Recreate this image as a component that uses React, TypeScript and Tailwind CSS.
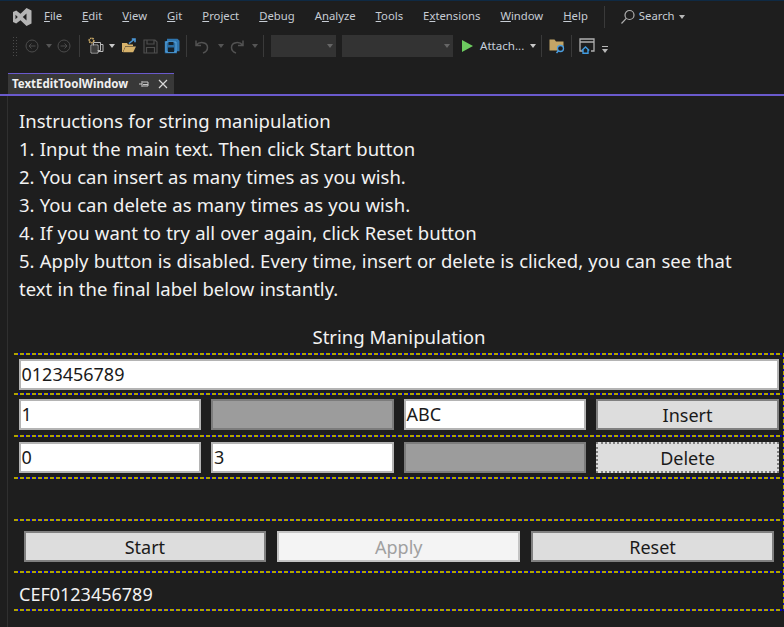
const font = "[font-family:'Noto_Sans',sans-serif]";

const menuItems: [string, string, string][] = [
    ["", "F", "ile"],
    ["", "E", "dit"],
    ["", "V", "iew"],
    ["", "G", "it"],
    ["", "P", "roject"],
    ["", "D", "ebug"],
    ["A", "n", "alyze"],
    ["", "T", "ools"],
    ["E", "x", "tensions"],
    ["", "W", "indow"],
    ["", "H", "elp"],
];

const instructions = [
    "Instructions for string manipulation",
    "1. Input the main text. Then click Start button",
    "2. You can insert as many times as you wish.",
    "3. You can delete as many times as you wish.",
    "4. If you want to try all over again, click Reset button",
    "5. Apply button is disabled. Every time, insert or delete is clicked, you can see that text in the final label below instantly.",
];

const Caret = ({ className = "" }: { className?: string }) => (
    <span className={`h-0 w-0 border-x-[3.5px] border-t-[4px] border-x-transparent border-t-[#8a8a8a] ${className}`} />
);

const Sep = ({ className = "" }: { className?: string }) => <span className={`h-[22px] w-px bg-[#3a3a3a] ${className}`} />;

const Dash = () => (
    <div className="h-[2px] w-full bg-[repeating-linear-gradient(90deg,#b0a400_0_4px,#0000c0_4px_6px)]" />
);

const Field = ({ value, disabled }: { value?: string; disabled?: boolean }) => (
    <div
        className={`flex h-[31px] items-center border-2 pl-[1px] text-[18px] text-[#1a1a1a] ${
            disabled ? "border-[#7c7c7c] bg-[#9c9c9c]" : "border-[#b4b4b4] bg-white"
        }`}
    >
        {value}
    </div>
);

const Btn = ({ label, focused, disabled }: { label: string; focused?: boolean; disabled?: boolean }) => (
    <div
        className={`flex h-[31px] items-center justify-center border-2 pt-[2px] text-[18px] ${
            disabled ? "border-[#c4c4c4] bg-[#f4f4f4] text-[#a0a0a0]" : "border-[#808080] bg-[#dddddd] text-[#1a1a1a]"
        } ${focused ? "border-dotted border-[#6a6a6a]" : ""}`}
    >
        {label}
    </div>
);

const VsLogo = () => (
    <svg width="20" height="20" viewBox="0 0 20 20" className="mt-[1px]">
        <path
            d="M14.5 1 19.5 3.5V16.5L14.5 19 8.5 13.2 4.2 16.5 1 15V5L4.2 3.5 8.5 6.8ZM14.5 6.5 10.8 10 14.5 13.5ZM3.5 7.8V12.2L5.8 10Z"
            fill="#b4b4b4"
            fillRule="evenodd"
        />
    </svg>
);

const Toolbar = () => (
    <div className="mt-[3px] flex h-[22px] items-center pl-[12px]">
        <span className="h-[20px] w-[5px] bg-[radial-gradient(#4a4a4a_1px,transparent_1px)] bg-[length:3px_3px]" />
        {/* back */}
        <svg width="14" height="14" viewBox="0 0 14 14" fill="none" stroke="#4c4c4c" className="ml-[8px]">
            <circle cx="7" cy="7" r="6" />
            <path d="M10.5 7H4M6.5 4.5 4 7l2.5 2.5" />
        </svg>
        <Caret className="ml-[7px] border-t-[#555555]" />
        <svg width="14" height="14" viewBox="0 0 14 14" fill="none" stroke="#4c4c4c" className="ml-[5px]">
            <circle cx="7" cy="7" r="6" />
            <path d="M3.5 7H10M7.5 4.5 10 7l-2.5 2.5" />
        </svg>
        <Sep className="ml-[8px]" />
        {/* new project */}
        <svg width="17" height="18" viewBox="0 0 17 18" fill="none" className="ml-[8px]">
            <circle cx="3.5" cy="3.5" r="2.3" stroke="#d8b46c" strokeWidth="1.6" strokeDasharray="1.4 .7" />
            <path d="M5.5 5.5h7v8h-7zM3 8h7v8H3zM12.5 7.5H15v7h-5" stroke="#b8b8b8" />
            <path d="M3.5 8.5h6v7h-6z" fill="#3c3c3c" />
        </svg>
        <Caret className="ml-[4px] border-t-[#c8c8c8]" />
        {/* open */}
        <svg width="16" height="16" viewBox="0 0 16 16" className="ml-[6px]">
            <path d="M1 14V5h5l1 1.5h5V8H4.5L1.8 14H1Z" fill="#d7b26a" />
            <path d="M4.5 8.5H15l-2.8 5.7H2Z" fill="#d7b26a" />
            <path d="M8 5.5 13 1.5M10.8 1H14v3.2" stroke="#4b97d6" strokeWidth="1.6" fill="none" />
        </svg>
        {/* save */}
        <svg width="15" height="15" viewBox="0 0 15 15" fill="none" stroke="#4e4e4e" strokeWidth="1.2" className="ml-[6px]">
            <path d="M1 1h11l2 2v11H1zM4 1v4h7V1M3.5 14V8.5h8V14" />
        </svg>
        {/* save all */}
        <svg width="16" height="16" viewBox="0 0 16 16" className="ml-[6px]">
            <path d="M3 0.8h10.5l2 2v10.5H13V15.2H.8V3H3Z" fill="#2f75ae" />
            <path d="M2 4h10v10H2z" fill="#2a6da3" stroke="#58a6e0" />
            <path d="M4.5 4h5v3h-5zM4 9.5h6V14H4z" fill="#16222c" />
        </svg>
        <Sep className="ml-[6px]" />
        {/* undo */}
        <svg width="14" height="15" viewBox="0 0 14 15" fill="none" stroke="#525252" strokeWidth="1.5" className="ml-[8px]">
            <path d="M1 1.5V6.5H6M1.5 6 C4 2.5 12.5 2.5 12.5 8.5 12.5 11 11 13 8 14" />
        </svg>
        <Caret className="ml-[9px] border-t-[#555555]" />
        <svg width="14" height="15" viewBox="0 0 14 15" fill="none" stroke="#525252" strokeWidth="1.5" className="ml-[6px]">
            <path d="M13 1.5V6.5H8M12.5 6C10 2.5 1.5 2.5 1.5 8.5 1.5 11 3 13 6 14" />
        </svg>
        <Caret className="ml-[8px] border-t-[#555555]" />
        <Sep className="ml-[5px]" />
        <div className="ml-[7px] flex h-[22px] w-[65px] items-center justify-end bg-[#333333] pr-[3px]">
            <Caret className="border-t-[#666666]" />
        </div>
        <div className="ml-[6px] flex h-[22px] w-[111px] items-center justify-end bg-[#333333] pr-[3px]">
            <Caret className="border-t-[#666666]" />
        </div>
        <span className="ml-[9px] h-0 w-0 border-y-[6.5px] border-l-[11px] border-y-transparent border-l-[#6ccb5f]" />
        <span className="ml-[7px] w-[46px] whitespace-nowrap text-[11.6px] text-[#c4cfdc]">Attach...</span>
        <Caret className="ml-[4px] border-t-[#c8c8c8]" />
        <Sep className="ml-[5px]" />
        {/* find in files */}
        <svg width="16" height="16" viewBox="0 0 16 16" className="ml-[7px]">
            <path d="M.5 1.5h5L7 3.5h7.5v9H.5Z" fill="#c3a566" />
            <circle cx="11.5" cy="10.5" r="3" fill="#1e1e1e" stroke="#4b9ee0" strokeWidth="1.3" />
            <path d="M9.5 12.8 7.5 15" stroke="#4b9ee0" strokeWidth="1.5" />
        </svg>
        <Sep className="ml-[6px]" />
        {/* window home */}
        <svg width="16" height="16" viewBox="0 0 16 16" fill="none" className="ml-[7px]">
            <path d="M4 13H1V1h14v12h-3M1 4h14" stroke="#b0b0b0" strokeWidth="1.3" />
            <path d="M2.8 12.5 6.5 9l3.7 3.5M4 11.5v3.7h5v-3.7" stroke="#3f9be0" strokeWidth="1.4" />
        </svg>
        <span className="ml-[6px] mt-[7px] flex w-[7px] flex-col items-center gap-[2px]">
            <span className="h-px w-[6px] bg-[#b8b8b8]" />
            <Caret className="border-t-[#b8b8b8]" />
        </span>
    </div>
);

const TitleBar = () => (
    <div className="flex h-[31px] items-center pl-[12px]">
        <VsLogo />
        <div className="ml-[2px] flex items-center">
            {menuItems.map(([pre, key, rest]) => (
                <span key={key + rest} className="whitespace-nowrap px-[10px] text-[11.3px] text-[#c6ccd4]">
                    {pre}
                    <u>{key}</u>
                    {rest}
                </span>
            ))}
        </div>
        <Sep className="ml-[6px]" />
        <svg width="16" height="16" viewBox="0 0 16 16" fill="none" stroke="#b0b0b0" strokeWidth="1.2" className="ml-[15px]">
            <circle cx="9.5" cy="6" r="4.5" />
            <path d="M6.3 9.3 1.5 14.5" />
        </svg>
        <span className="ml-[3px] text-[11.3px] text-[#c6ccd4]">Search</span>
        <Caret className="ml-[4px] border-t-[#b8b8b8]" />
    </div>
);

const TabStrip = () => (
    <div className="mt-[16px] flex h-[23px] flex-col">
        <div className="ml-[8px] flex h-[21px] w-[166px] items-center border-t border-[#6a5acd] bg-[#383838] pl-[4px]">
            <span className="w-[117px] whitespace-nowrap text-[11.5px] font-bold text-[#f0f0f0]">TextEditToolWindow</span>
            <svg width="10" height="10" viewBox="0 0 10 10" fill="none" stroke="#c8c8c8" className="ml-[10px]">
                <path d="M0 5h3M3 2v6M3.5 3H9v4H3.5M4 5.5h5" />
            </svg>
            <svg width="10" height="10" viewBox="0 0 10 10" fill="none" stroke="#d8d8d8" strokeWidth="1.2" className="ml-[9px]">
                <path d="M1 1l8 8M9 1 1 9" />
            </svg>
        </div>
        <div className="h-[2px] bg-[#6a5acd]" />
    </div>
);

const Content = () => (
    <div className="ml-[7px] flex flex-1 flex-col border-l border-[#303030] pl-[6px] text-white">
        <div className="pl-[5px] pr-[20px] pt-[11px] text-[18.5px] leading-[28px] text-[#f2f2f2] [word-spacing:0.4px]">
            {instructions.map((line) => (
                <p key={line}>{line}</p>
            ))}
        </div>
        <div className="mt-[20px] text-center text-[18.6px] leading-[28px] text-[#f2f2f2]">String Manipulation</div>

        <div className="relative mt-[2px] pr-[2px]">
            {/* dashed right edge of the layout grid */}
            <div className="absolute bottom-0 right-0 top-0 w-[1.5px] bg-[repeating-linear-gradient(180deg,#b0a400_0_4px,#0000c0_4px_6px)]" />
            <Dash />
            <div className="pb-[3px] pl-[4.5px] pr-[3px] pt-[4px]">
                <div className="flex h-[31px] items-center border-2 border-[#b4b4b4] bg-white pl-[1px] text-[18px] text-[#1a1a1a]">
                    0123456789
                </div>
            </div>
            <Dash />
            <div className="grid grid-cols-4 gap-x-[9.6px] pb-[5px] pl-[4.5px] pr-[3px] pt-[4px]">
                <Field value="1" />
                <Field disabled />
                <Field value="ABC" />
                <Btn label="Insert" />
            </div>
            <Dash />
            <div className="grid grid-cols-4 gap-x-[9.6px] pb-[4px] pl-[4.5px] pr-[3px] pt-[5px]">
                <Field value="0" />
                <Field value="3" />
                <Field disabled />
                <Btn label="Delete" focused />
            </div>
            <Dash />

            <div className="h-[40px]" />
            <Dash />
            <div className="grid grid-cols-3 gap-x-[11px] pb-[9px] pl-[9.5px] pr-[8px] pt-[10px]">
                <Btn label="Start" />
                <Btn label="Apply" disabled />
                <Btn label="Reset" />
            </div>
            <Dash />
            <div className="h-[36px] pl-[5px] text-[18px] leading-[42px] text-[#f2f2f2]">CEF0123456789</div>
            <Dash />
        </div>
    </div>
);

export default function App() {
    return (
        <div className={`flex h-[627px] w-[784px] flex-col overflow-hidden border-t border-[#0f2a44] bg-[#1e1e1e] ${font}`}>
            <TitleBar />
            <Toolbar />
            <TabStrip />
            <Content />
        </div>
    );
}
